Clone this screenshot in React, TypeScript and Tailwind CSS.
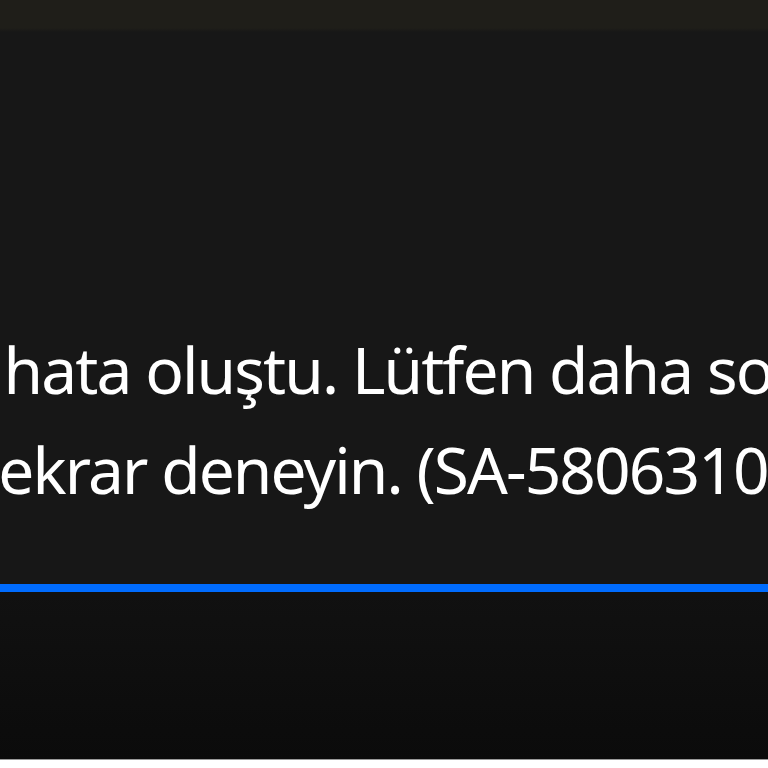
export default function App() {
  return (
    <div className="w-full h-[768px] overflow-hidden flex flex-col bg-[#171717] font-['Noto_Sans',sans-serif]">
      {/* top strip */}
      <div className="h-[28px] bg-[#1f1e19]" />
      <div className="h-[4px] bg-gradient-to-b from-[#1f1e19] to-[#171717]" />

      {/* message */}
      <div className="pt-[288px] text-white text-[64px] leading-[100px] tracking-[-1.9px] whitespace-nowrap">
        <div className="ml-[-90px]">Bir hata oluştu. Lütfen daha sonra</div>
        <div className="ml-[-23px]">tekrar deneyin. (SA-58063100)</div>
      </div>

      {/* progress bar */}
      <div className="mt-[64px] h-[8px] bg-[#006cff]" />

      <div className="h-[167px] bg-gradient-to-b from-[#111111] to-[#0b0b0b]" />
      <div className="h-px bg-[#9a9a9a]" />
      <div className="flex-1 bg-white" />
    </div>
  );
}
